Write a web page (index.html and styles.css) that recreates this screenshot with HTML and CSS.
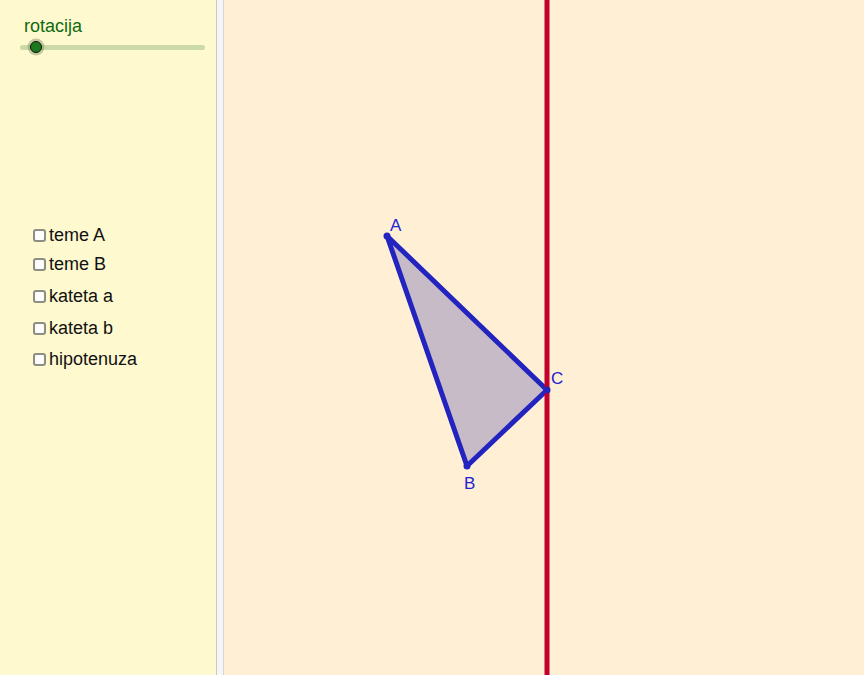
FILE: index.html
```html
<!DOCTYPE html>
<html>
<head>
<meta charset="utf-8">
<link rel="stylesheet" href="styles.css">
</head>
<body>
<div class="app">
  <aside class="panel">
    <div class="slider">
      <div class="slider-label">rotacija</div>
      <div class="track"><span class="knob"></span></div>
    </div>
    <ul class="checks">
      <li class="row r1"><span class="box"></span>teme A</li>
      <li class="row r2"><span class="box"></span>teme B</li>
      <li class="row r3"><span class="box"></span>kateta a</li>
      <li class="row r4"><span class="box"></span>kateta b</li>
      <li class="row r5"><span class="box"></span>hipotenuza</li>
    </ul>
  </aside>
  <div class="divider"></div>
  <main class="canvas">
    <svg class="graph" viewBox="0 0 640 675" width="640" height="675">
      <polygon points="163,236 243,466 323,390" fill="#c7bbc7" stroke="#2323bf" stroke-width="5" stroke-linejoin="round"/>
      <line x1="323" y1="0" x2="323" y2="675" stroke="#c2002b" stroke-width="5"/>
      <circle cx="163" cy="236" r="3.5" fill="#2323bf"/>
      <circle cx="243" cy="466" r="3.5" fill="#2323bf"/>
      <circle cx="323" cy="390" r="3.5" fill="#2323bf"/>
      <text class="lbl" x="166" y="231">A</text>
      <text class="lbl" x="240" y="489">B</text>
      <text class="lbl" x="327" y="384">C</text>
    </svg>
  </main>
</div>
</body>
</html>
```
FILE: styles.css
```css
html, body {
  margin: 0;
  padding: 0;
  width: 864px;
  height: 675px;
  overflow: hidden;
  font-family: "Liberation Sans", Arial, sans-serif;
}
.app {
  display: flex;
  width: 864px;
  height: 675px;
}
.panel {
  width: 216px;
  flex: none;
  background: #fff9d0;
  padding-top: 15px;
  box-sizing: border-box;
}
.slider {
  padding-left: 20px;
}
.slider-label {
  color: #0f6b0f;
  font-size: 18px;
  line-height: 22px;
  padding-left: 4px;
}
.track {
  position: relative;
  width: 185px;
  height: 5px;
  border-radius: 3px;
  background: #cbdaa6;
  margin-top: 8px;
}
.knob {
  position: absolute;
  left: 10px;
  top: -4px;
  width: 10px;
  height: 10px;
  border-radius: 50%;
  background: #1c7a1c;
  border: 1px solid #111;
  box-shadow: 0 0 0 2.5px rgba(120, 140, 90, 0.45);
}
.checks {
  list-style: none;
  margin: 0;
  padding: 0 0 0 33px;
  margin-top: 175px;
}
.row {
  display: flex;
  align-items: center;
  font-size: 18px;
  color: #111;
  height: 20px;
}
.r2 { margin-top: 9px; }
.r3 { margin-top: 12px; }
.r4 { margin-top: 12px; }
.r5 { margin-top: 11px; }
.box {
  width: 9px;
  height: 9px;
  border: 2px solid #8d8d84;
  border-radius: 3px;
  background: #fdfdfd;
  margin-right: 3px;
  flex: none;
}
.divider {
  width: 6px;
  flex: none;
  background: #f6f6f6;
  border-left: 1px solid #c9c9c9;
  border-right: 1px solid #d6d6d6;
}
.canvas {
  flex: 1;
  background: #ffefd5;
  overflow: hidden;
}
.graph {
  display: block;
}
.lbl {
  fill: #2323d0;
  font-family: "Liberation Sans", Arial, sans-serif;
  font-size: 17px;
}
```
